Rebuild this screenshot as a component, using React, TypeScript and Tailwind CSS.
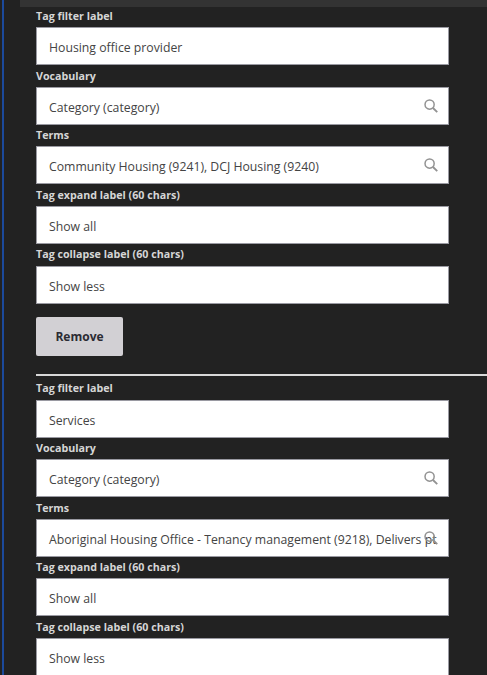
function SearchIcon() {
  return (
    <svg className="absolute top-[11px] right-[10px] h-[14px] w-[14px]" viewBox="0 0 15 15" fill="none" stroke="#929292" strokeWidth="1.6">
      <circle cx="6" cy="6" r="4.9" />
      <path d="M9.6 9.6L14.2 14" strokeWidth="2" />
    </svg>
  );
}

function Field({ label, value, search }: { label: string; value: string; search?: boolean }) {
  return (
    <div>
      <label className="block h-[21.6px] pt-[1.5px] text-[10.7px] leading-[18px] font-bold text-[#d6d6d6]">{label}</label>
      <div className="relative h-[38px] w-[413px] overflow-hidden border border-[#9a9aa2] bg-white pl-[12px] text-[12.25px] leading-[40px] whitespace-nowrap text-[#444]">
        {value}
        {search && <SearchIcon />}
      </div>
    </div>
  );
}

function TagGroup({ label, terms }: { label: string; terms: string }) {
  return (
    <div>
      <Field label="Tag filter label" value={label} />
      <Field label="Vocabulary" value="Category (category)" search />
      <Field label="Terms" value={terms} search />
      <Field label="Tag expand label (60 chars)" value="Show all" />
      <Field label="Tag collapse label (60 chars)" value="Show less" />
    </div>
  );
}

export default function App() {
  return (
    <div className="h-[675px] w-[487px] overflow-hidden bg-[#222222] font-['Open_Sans','Noto_Sans',sans-serif]">
      <div className="flex h-full">
        <div className="ml-[2px] h-full w-[2px] bg-[#1c4a9c]" />
        <div className="flex-1">
          <div className="ml-[16px] h-[7px] bg-[#333333]" />
          <div className="-mt-[1.4px] pl-[32px]">
            <TagGroup label="Housing office provider" terms="Community Housing (9241), DCJ Housing (9240)" />
            <button className="mt-[13.4px] h-[39px] w-[87px] rounded-[2px] bg-[#d2d0d4] pt-[1px] text-[12px] font-bold text-[#2b2b33]">Remove</button>
          </div>
          <div className="mt-[18px] ml-[32px] h-[2px] bg-[#d8d8d8]" />
          <div className="pt-[2px] pl-[32px]">
            <TagGroup label="Services" terms="Aboriginal Housing Office - Tenancy management (9218), Delivers pt" />
          </div>
        </div>
      </div>
    </div>
  );
}
